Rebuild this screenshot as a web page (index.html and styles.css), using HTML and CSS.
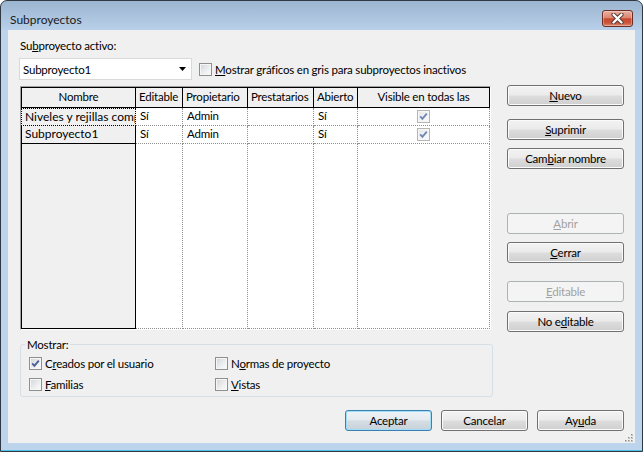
FILE: index.html
```html
<!DOCTYPE html>
<html lang="es">
<head>
<meta charset="utf-8">
<title>Subproyectos</title>
<link rel="stylesheet" href="styles.css">
</head>
<body>
<div class="window">
  <div class="titlebar">
    <span class="title">Subproyectos</span>
    <div class="close">
      <svg width="13" height="11" viewBox="0 0 13 11">
        <path d="M2.5 1.5 L10.5 9.5 M10.5 1.5 L2.5 9.5" stroke="#5a3a35" stroke-width="4.2" stroke-linecap="round" fill="none"/>
        <path d="M2.5 1.5 L10.5 9.5 M10.5 1.5 L2.5 9.5" stroke="#ffffff" stroke-width="2.3" stroke-linecap="round" fill="none"/>
      </svg>
    </div>
  </div>
  <div class="client">
    <div class="lbl">Su<u>b</u>proyecto activo:</div>
    <div class="combo-row">
      <div class="combo"><span>Subproyecto1</span>
        <svg class="arrow" width="7" height="4" viewBox="0 0 7 4"><path d="M0 0 H7 L3.5 4 Z" fill="#000"/></svg>
      </div>
      <div class="chk"><span class="cb"></span><span class="chk-text"><u>M</u>ostrar gráficos en gris para subproyectos inactivos</span></div>
    </div>
    <div class="main">
      <div class="grid">
        <div class="h h1 c">Nombre</div>
        <div class="h">Editable</div>
        <div class="h">Propietario</div>
        <div class="h">Prestatarios</div>
        <div class="h">Abierto</div>
        <div class="h c wrap">Visible en todas las vistas</div>

        <div class="rh sel">Niveles y rejillas compartidos</div>
        <div class="d">Sí</div>
        <div class="d">Admin</div>
        <div class="d"></div>
        <div class="d">Sí</div>
        <div class="d cc"><span class="cb dis"><svg width="11" height="11" viewBox="0 0 11 11"><path d="M2.2 5.4 L4.4 7.8 L8.8 2.6" stroke="#6f88b6" stroke-width="1.9" fill="none"/></svg></span></div>

        <div class="rh">Subproyecto1</div>
        <div class="d">Sí</div>
        <div class="d">Admin</div>
        <div class="d"></div>
        <div class="d">Sí</div>
        <div class="d cc"><span class="cb dis"><svg width="11" height="11" viewBox="0 0 11 11"><path d="M2.2 5.4 L4.4 7.8 L8.8 2.6" stroke="#6f88b6" stroke-width="1.9" fill="none"/></svg></span></div>

        <div class="rh"></div>
        <div class="d"></div>
        <div class="d"></div>
        <div class="d"></div>
        <div class="d"></div>
        <div class="d"></div>
      </div>
      <div class="side">
        <button class="btn"><u>N</u>uevo</button>
        <button class="btn s1"><u>S</u>uprimir</button>
        <button class="btn s2">Cam<u>b</u>iar nombre</button>
        <button class="btn dis s3"><u>A</u>brir</button>
        <button class="btn s2"><u>C</u>errar</button>
        <button class="btn dis s4"><u>E</u>ditable</button>
        <button class="btn s5">No e<u>d</u>itable</button>
      </div>
    </div>
    <fieldset class="group">
      <legend>Mostrar:</legend>
      <div class="opts">
        <div class="chk"><span class="cb"><svg width="11" height="11" viewBox="0 0 11 11"><path d="M2.2 5.4 L4.4 7.8 L8.8 2.6" stroke="#4a5f97" stroke-width="1.9" fill="none"/></svg></span><span class="chk-text">C<u>r</u>eados por el usuario</span></div>
        <div class="chk"><span class="cb"></span><span class="chk-text">N<u>o</u>rmas de proyecto</span></div>
        <div class="chk"><span class="cb"></span><span class="chk-text"><u>F</u>amilias</span></div>
        <div class="chk"><span class="cb"></span><span class="chk-text"><u>V</u>istas</span></div>
      </div>
    </fieldset>
    <div class="footer">
      <button class="btn fb def">Aceptar</button>
      <button class="btn fb">Cancelar</button>
      <button class="btn fb">Ay<u>u</u>da</button>
    </div>
    <svg class="grip" width="9" height="9" viewBox="0 0 9 9">
      <g fill="#c4c4c4">
        <rect x="7" y="1" width="2" height="2"/>
        <rect x="4" y="4" width="2" height="2"/><rect x="7" y="4" width="2" height="2"/>
        <rect x="1" y="7" width="2" height="2"/><rect x="4" y="7" width="2" height="2"/><rect x="7" y="7" width="2" height="2"/>
      </g>
      <g fill="#8f8f8f">
        <rect x="7" y="1" width="1" height="1"/>
        <rect x="4" y="4" width="1" height="1"/><rect x="7" y="4" width="1" height="1"/>
        <rect x="1" y="7" width="1" height="1"/><rect x="4" y="7" width="1" height="1"/><rect x="7" y="7" width="1" height="1"/>
      </g>
    </svg>
  </div>
</div>
</body>
</html>
```

FILE: styles.css
```css
* { box-sizing: border-box; }
html, body { margin: 0; padding: 0; }
body {
  width: 643px;
  height: 452px;
  overflow: hidden;
  font-family: "Lato", "Liberation Sans", sans-serif;
  font-size: 11.5px;
  letter-spacing: -0.2px;
  line-height: 15px;
  color: #000;
  background: #ffffff;
}
u { text-decoration: underline; text-underline-offset: 1px; }

.window {
  width: 643px;
  height: 452px;
  border: 1px solid #2f3843;
  border-radius: 7px 7px 0 0;
  padding: 0 7px 8px;
  background: linear-gradient(#9cb5d0 0, #b8d0e9 29px, #bdd5ec 29px, #bdd5ec 100%);
  box-shadow: inset 0 -1px 0 #4cc3ea;
  display: flex;
  flex-direction: column;
}

.titlebar {
  height: 29px;
  display: flex;
  justify-content: space-between;
  align-items: flex-start;
}
.title { margin: 11px 0 0 2px; color: #1b1b1b; font-size: 12px; letter-spacing: 0; }
.close {
  margin: 9px 2px 0 0;
  width: 31px;
  height: 17px;
  border: 1px solid #6b2d24;
  border-radius: 3px;
  background: linear-gradient(#eab0a2 0%, #dc8670 45%, #c6492f 52%, #c9563c 80%, #dc8c72 100%);
  box-shadow: inset 0 0 0 1px rgba(255, 255, 255, 0.3);
  display: flex;
  align-items: center;
  justify-content: center;
}

.client {
  position: relative;
  height: 413px;
  background: #f0f0f0;
  padding: 8px 11px 0 12px;
}

.lbl { height: 15px; }

.combo-row {
  display: flex;
  align-items: center;
  margin-top: 5px;
}
.combo {
  width: 173px;
  height: 22px;
  margin-left: -1px;
  border: 1px solid #d9d9d9;
  background: #fff;
  display: flex;
  align-items: center;
  justify-content: space-between;
  padding: 0 5px 0 3px;
}
.combo-row > .chk { margin-left: 7px; }

.chk { display: flex; align-items: center; }
.chk-text { margin-left: 3px; white-space: nowrap; }

.cb {
  width: 13px;
  height: 13px;
  flex: none;
  border: 1px solid #8e8f8f;
  background: linear-gradient(135deg, #d2d4d8 0%, #eeeff0 60%, #fbfbfb 100%);
  box-shadow: inset 0 0 0 1px #f6f6f6;
  display: flex;
  align-items: center;
  justify-content: center;
}
.cb.dis {
  border-color: #b5b5b5;
  background: linear-gradient(135deg, #e6e6e6 0%, #f4f4f4 60%, #fafafa 100%);
}

.main {
  display: flex;
  align-items: flex-start;
  margin-top: 6px;
}

.grid {
  width: 471px;
  height: 244px;
  border: 1px solid;
  border-color: #a0a0a0 #ffffff #ffffff #a0a0a0;
  background: #fff;
  display: grid;
  grid-template-columns: 115px 47px 65px 66px 44px 132px;
  grid-template-rows: 21px 18px 18px 1fr;
}
.h {
  background: #f0f0f0;
  border-top: 1px solid #000;
  border-right: 1px solid #000;
  border-bottom: 1px solid #000;
  overflow: hidden;
  white-space: nowrap;
  padding: 1px 0 0 3px;
}
.h.c { text-align: center; padding-left: 0; white-space: normal; }
.h.wrap { padding-left: 14px; padding-right: 14px; }
.h1 { border-left: 1px solid #000; }

.rh {
  background: #f0f0f0;
  border-left: 1px solid #000;
  border-right: 1px solid #000;
  border-bottom: 1px solid #000;
  overflow: hidden;
  white-space: nowrap;
  padding-left: 3px;
  font-size: 12px;
  letter-spacing: 0;
}
.rh.sel {
  border: 1px dotted #000;
}
.d {
  border-right: 1px dotted #8f8f8f;
  border-bottom: 1px dotted #8f8f8f;
  padding-left: 4px;
  overflow: hidden;
  white-space: nowrap;
}
.d.cc {
  padding-left: 0;
  display: flex;
  align-items: center;
  justify-content: center;
}

.side {
  margin-left: 16px;
  margin-top: -1px;
  width: 117px;
  display: flex;
  flex-direction: column;
}

.btn {
  height: 21px;
  margin: 0;
  padding: 0;
  border: 1px solid #707070;
  border-radius: 3px;
  background: linear-gradient(#f2f2f2 0%, #ebebeb 48%, #dddddd 52%, #cfcfcf 100%);
  box-shadow: inset 0 0 0 1px #fbfbfb;
  font-family: inherit;
  font-size: 11.5px;
  letter-spacing: -0.2px;
  line-height: 17px;
  color: #000;
  text-align: center;
}
.btn.dis {
  border-color: #adb2b5;
  background: #f4f4f4;
  box-shadow: none;
  color: #a2a2a2;
}
.btn.def {
  border-color: #3c7fb1;
  background: linear-gradient(#eef3f6 0%, #e4eaee 48%, #d5dde3 52%, #c8d2da 100%);
  box-shadow: inset 0 0 0 1px #9edff7;
}
.s1 { margin-top: 13px; }
.s2 { margin-top: 8px; }
.s3 { margin-top: 44px; }
.s4 { margin-top: 18px; }
.s5 { margin-top: 9px; }

.group {
  margin: 5px 0 0 0;
  width: 473px;
  border: 1px solid #d5dfe5;
  border-radius: 3px;
  padding: 1px 8px 1px;
  min-width: 0;
}
.group legend {
  padding: 0 2px;
  margin-left: -4px;
  line-height: 15px;
}
.opts {
  display: grid;
  grid-template-columns: 186px auto;
  grid-auto-rows: 21px;
}

.footer {
  display: flex;
  justify-content: flex-end;
  gap: 9px;
  margin-top: 13px;
}
.btn.fb { width: 87px; }

.grip {
  position: absolute;
  right: 2px;
  bottom: 1px;
}
```
